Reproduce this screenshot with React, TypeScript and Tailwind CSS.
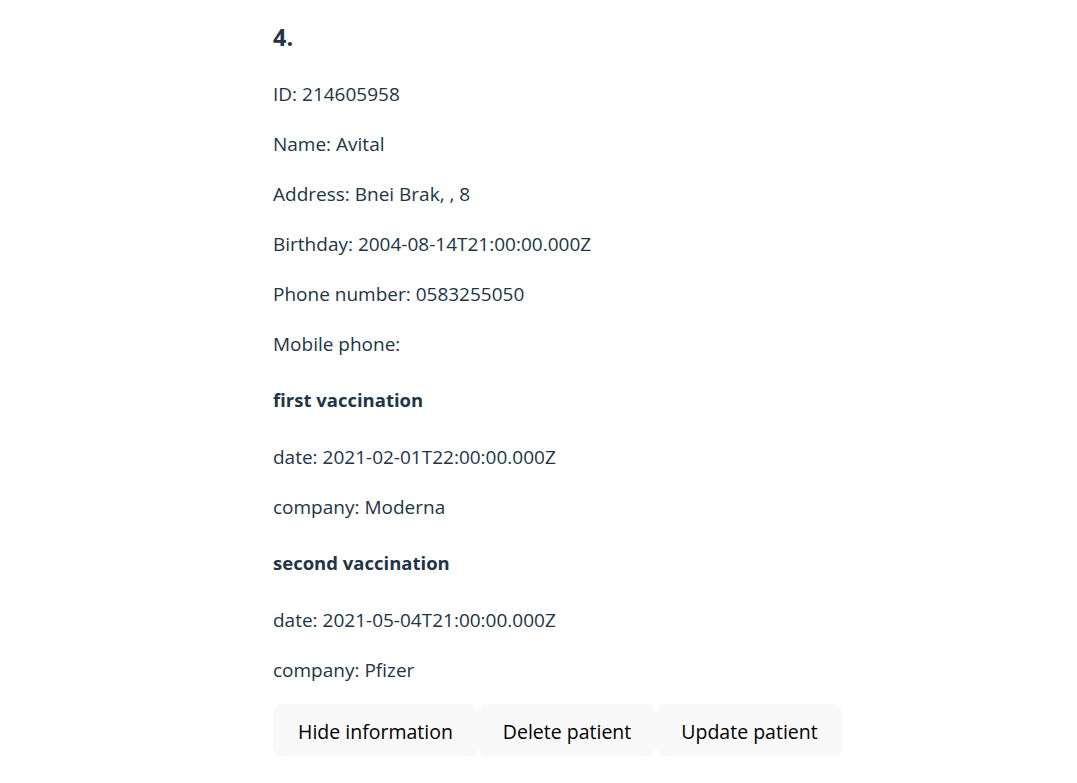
import { useState } from "react";

type Vaccination = {
  date: string;
  company: string;
};

type Patient = {
  index: number;
  id: string;
  name: string;
  city: string;
  street: string;
  houseNumber: string;
  birthday: string;
  phone: string;
  mobile: string;
  vaccinations: Vaccination[];
};

const patient: Patient = {
  index: 4,
  id: "214605958",
  name: "Avital",
  city: "Bnei Brak",
  street: "",
  houseNumber: "8",
  birthday: "2004-08-14T21:00:00.000Z",
  phone: "0583255050",
  mobile: "",
  vaccinations: [
    { date: "2021-02-01T22:00:00.000Z", company: "Moderna" },
    { date: "2021-05-04T21:00:00.000Z", company: "Pfizer" },
  ],
};

const titles = ["first", "second", "third", "fourth"];

const Line = ({ children }: { children: React.ReactNode }) => (
  <p className="leading-[30px] mt-[20px]">{children}</p>
);

const PatientCard = ({ data }: { data: Patient }) => {
  const [open, setOpen] = useState<boolean>(true);
  return (
    <div className="flex flex-col items-start">
      <h3 className="text-[23.4px] leading-[35px] font-bold">{data.index}.</h3>
      {open && (
        <div className="flex flex-col mt-[3.5px]">
          <Line>ID: {data.id}</Line>
          <Line>Name: {data.name}</Line>
          <Line>
            Address: {data.city}, {data.street}, {data.houseNumber}
          </Line>
          <Line>Birthday: {data.birthday}</Line>
          <Line>Phone number: {data.phone}</Line>
          <Line>Mobile phone: {data.mobile}</Line>
          {data.vaccinations.map((v, i) => (
            <div key={i} className="flex flex-col">
              <h4 className="text-[18.5px] font-bold leading-[30px] mt-[26px] mb-[7px]">
                {titles[i]} vaccination
              </h4>
              <Line>date: {v.date}</Line>
              <Line>company: {v.company}</Line>
            </div>
          ))}
        </div>
      )}
      <div className="flex mt-[19px]">
        <button
          className="bg-[#f9f9f9] text-black text-[19.5px] font-medium rounded-[10px] border border-transparent px-[24px] h-[53px] pt-[3px]"
          onClick={() => setOpen(!open)}
        >
          {open ? "Hide information" : "Show information"}
        </button>
        <button className="bg-[#f9f9f9] text-black text-[19.5px] font-medium rounded-[10px] border border-transparent px-[24px] h-[53px] pt-[3px]">
          Delete patient
        </button>
        <button className="bg-[#f9f9f9] text-black text-[19.5px] font-medium rounded-[10px] border border-transparent px-[24px] h-[53px] pt-[3px]">
          Update patient
        </button>
      </div>
    </div>
  );
};

export default function App() {
  return (
    <div className="min-h-[783px] bg-white text-[#213547] text-[19px] font-['Open_Sans',sans-serif] pl-[273px] pt-[20px]">
      <PatientCard data={patient} />
    </div>
  );
}
